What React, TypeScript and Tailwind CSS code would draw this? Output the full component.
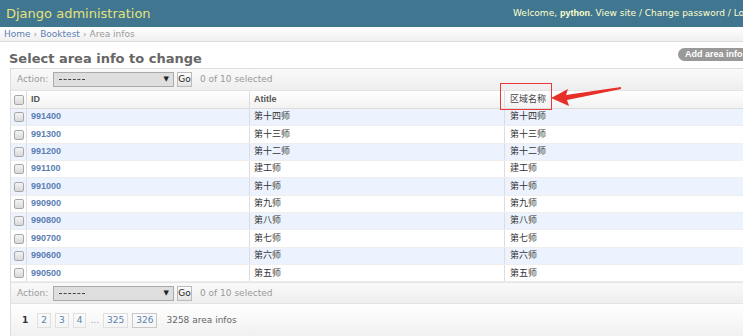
import React from "react";

const rows = [
  ["991400", "第十四师"],
  ["991300", "第十三师"],
  ["991200", "第十二师"],
  ["991100", "建工师"],
  ["991000", "第十师"],
  ["990900", "第九师"],
  ["990800", "第八师"],
  ["990700", "第七师"],
  ["990600", "第六师"],
  ["990500", "第五师"],
];

const arial = { fontFamily: '"Liberation Sans", "Noto Sans CJK SC", sans-serif' };

function Check() {
  return <div className="w-[10px] h-[10px] rounded-[2px] border border-[#a8a8a8] bg-gradient-to-b from-[#f4f4f4] to-[#d8d8d8]" />;
}

function ActionBar({ top }: { top?: boolean }) {
  return (
    <div className={`h-[22px] flex items-center bg-gradient-to-b from-[#fafafa] to-[#eeeeee] border-b border-[#e4e4e4] ${top ? "" : "border-t"}`}>
      <span className="ml-[6px] w-[36px] shrink-0 text-[9px] text-[#999]">Action:</span>
      <div className="w-[121px] h-[15px] shrink-0 border border-[#aaa] bg-[#dedede] flex items-center justify-between pl-[5px] pr-[4px]">
        <span className="w-[26px] h-0 border-t border-dashed border-[#444]" />
        <span className="text-[7px] text-[#222] leading-none">▼</span>
      </div>
      <div className="ml-[3px] w-[15px] h-[15px] shrink-0 border border-[#bbb] bg-gradient-to-b from-[#fff] to-[#e4e4e4] text-[9px] text-[#222] flex items-center justify-center">Go</div>
      <span className="ml-[8px] text-[9px] text-[#999] whitespace-nowrap">0 of 10 selected</span>
    </div>
  );
}

function PageBox({ n, end }: { n: string; end?: boolean }) {
  return (
    <div className={`h-[15px] px-[3px] flex items-center border ${end ? "border-[#c8c8c8]" : "border-[#e0e0e0]"} text-[9px] text-[#5b80b2]`}>{n}</div>
  );
}

export default function App() {
  return (
    <div className="w-[743px] h-[336px] overflow-hidden bg-white relative" style={{ fontFamily: '"DejaVu Sans", "Noto Sans CJK SC", sans-serif' }}>
      <div className="w-[820px]">
        <div className="h-[27px] bg-[#417690] flex items-center px-[6px]">
          <div className="w-[507px] shrink-0 text-[13px] text-[#e6e27a] leading-none">Django administration</div>
          <div className="text-[9px] text-[#ffc] whitespace-nowrap">
            Welcome, <b style={arial}>python</b>. View site / Change password / Log out
          </div>
        </div>
        <div className="h-[15px] pt-[1px] border-b border-[#ddd] bg-gradient-to-b from-white to-[#f0f0f0] flex items-center px-[4px] text-[9px] text-[#999]">
          <span className="text-[#5b80b2]">Home</span>
          <span className="mx-[3px]">›</span>
          <span className="text-[#5b80b2]">Booktest</span>
          <span className="mx-[3px]">›</span>
          <span>Area infos</span>
        </div>
        <div className="px-[10px]">
          <div className="flex items-start h-[26px]">
            <div className="w-[669px] shrink-0 -ml-[1px] mt-[7px] h-[19px] leading-[19px] text-[13px] font-bold text-[#666]">Select area info to change</div>
            <div className="mt-[6px] h-[13px] px-[7px] rounded-full bg-[#999] text-white text-[9px] font-bold leading-[13px] whitespace-nowrap" style={arial}>Add area info</div>
          </div>
          <div className="border border-[#ddd] w-[800px]">
            <ActionBar top />
            <div className="h-[18px] flex items-center border-b border-[#ddd] bg-gradient-to-b from-white to-[#f2f2f2] text-[9px] font-bold text-[#555]" style={arial}>
              <div className="w-[15px] h-full flex items-center justify-center"><Check /></div>
              <div className="w-[223px] h-full flex items-center pl-[4px] border-l border-[#ddd]">ID</div>
              <div className="w-[255px] h-full flex items-center pl-[4px] border-l border-[#ddd]">Atitle</div>
              <div className="flex-1 h-full flex items-center pl-[5px] border-l border-[#ddd] font-normal text-[#444]">区域名称</div>
            </div>
            {rows.map(([id, name], i) => (
              <div key={id} className={`h-[17.35px] flex items-center border-b border-[#eee] text-[9px] ${i % 2 === 0 ? "bg-[#edf3fe]" : "bg-white"}`}>
                <div className="w-[15px] h-full flex items-center justify-center"><Check /></div>
                <div className="w-[223px] h-full flex items-center pl-[4px] border-l border-[#ddd] font-bold text-[#5b80b2]" style={arial}>{id}</div>
                <div className="w-[255px] h-full flex items-center pl-[4px] border-l border-[#ddd] text-[#333]">{name}</div>
                <div className="flex-1 h-full flex items-center pl-[5px] border-l border-[#ddd] text-[#333]">{name}</div>
              </div>
            ))}
            <ActionBar />
            <div className="h-[33px] flex items-center pl-[11px] gap-[4px] bg-gradient-to-b from-white to-[#f0f0f0]">
              <span className="text-[9px] font-bold text-[#333] mr-[5px]">1</span>
              <PageBox n="2" />
              <PageBox n="3" />
              <PageBox n="4" />
              <span className="text-[9px] text-[#999]">...</span>
              <PageBox n="325" />
              <PageBox n="326" end />
              <span className="ml-[5px] text-[9px] text-[#666]">3258 area infos</span>
            </div>
          </div>
        </div>
      </div>
      <div className="absolute left-[500px] top-[83px] w-[52px] h-[27px] border border-[#e8393a]" />
      <svg className="absolute left-0 top-0 pointer-events-none" width="743" height="336">
        <polygon points="551,98 568,89 566,95 621,87 621,89 567,100 569,106" fill="#e8302a" />
      </svg>
    </div>
  );
}
